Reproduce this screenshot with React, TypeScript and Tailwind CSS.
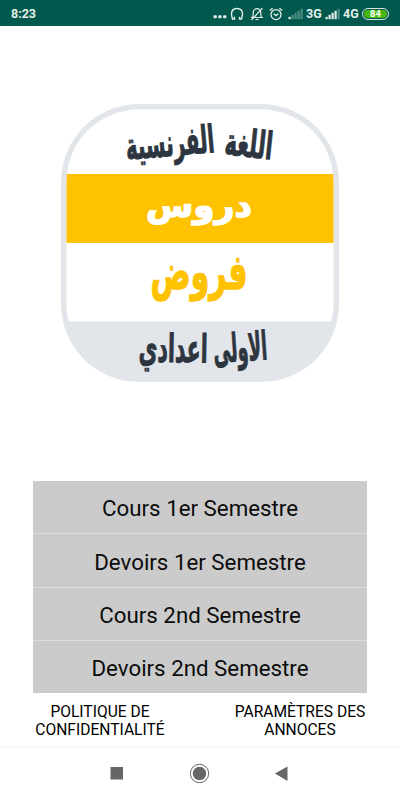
import { useState } from "react";

interface LogoWordProps {
  text: string;
  x: number;
  y: number;
  width: number;
  size: number;
  angle?: number;
  weight?: number;
  color: string;
}

const menuItems = [
  "Cours 1er Semestre",
  "Devoirs 1er Semestre",
  "Cours 2nd Semestre",
  "Devoirs 2nd Semestre",
];

// x / y is the middle of the word's baseline
const LogoWord: React.FC<LogoWordProps> = ({
  text,
  x,
  y,
  width,
  size,
  angle = 0,
  weight = 1,
  color,
}) => (
  <text
    transform={`translate(${x} ${y}) rotate(${angle})`}
    textAnchor="middle"
    direction="rtl"
    textLength={width}
    lengthAdjust="spacingAndGlyphs"
    fontSize={size}
    fill={color}
    stroke={color}
    strokeWidth={weight}
    className="font-['DejaVu_Sans',sans-serif] font-bold"
  >
    {text}
  </text>
);

const Logo = () => (
  <svg viewBox="0 0 278 278" className="h-[278px] w-[278px] overflow-visible">
    <defs>
      <clipPath id="inner">
        <rect x="5.5" y="5.5" width="267" height="267" rx="72" />
      </clipPath>
    </defs>
    <rect width="278" height="278" rx="78" fill="#e2e5ea" />
    <g clipPath="url(#inner)">
      <rect width="278" height="217.5" fill="#fff" />
      <rect y="70" width="278" height="69" fill="#ffc200" />
    </g>
    <LogoWord text="اللغة" x={186.5} y={53} width={48} size={38} angle={6} color="#2d3640" />
    <LogoWord text="الفرنسية" x={110} y={52} width={89} size={38} angle={-5} color="#2d3640" />
    <LogoWord text="دروس" x={138} y={113} width={106} size={33} weight={1.4} color="#fff" />
    <LogoWord text="فروض" x={138} y={184.5} width={97} size={49} weight={1.4} color="#ffc200" />
    <LogoWord text="الاولى" x={180} y={257} width={54} size={39} angle={-4} color="#2d3640" />
    <LogoWord text="اعدادي" x={112} y={258} width={69} size={39} angle={1} color="#2d3640" />
  </svg>
);

const Signal = ({ level }: { level: number }) => (
  <svg viewBox="0 0 16 12" className="h-3 w-4">
    {[0, 1, 2, 3, 4].map((bar) => (
      <rect
        key={bar}
        x={bar * 3 + 0.5}
        y={8.8 - bar * 2}
        width="2.2"
        height={2.4 + bar * 2}
        fill="#e3eeeb"
        opacity={bar < level ? 1 : 0.35}
      />
    ))}
  </svg>
);

const StatusBar = () => (
  <div className="flex h-[26px] items-center bg-[#00594c] pt-0.5 pr-[11px] pl-[11px] text-[12.500px] font-bold text-[#e3eeeb]">
    <span>8:23</span>
    <div className="ml-auto flex items-center">
      <svg viewBox="0 0 14 12" className="mr-[3px] h-3 w-3.5" fill="#e3eeeb">
        <rect x="0.5" y="7.3" width="3.3" height="3" rx="0.8" />
        <rect x="5.3" y="7.3" width="3.3" height="3" rx="0.8" />
        <rect x="10.1" y="7.3" width="3.3" height="3" rx="0.8" />
      </svg>
      {/* headphones */}
      <svg viewBox="0 0 14 14" className="mr-[6px] h-3.5 w-3.5" fill="none" stroke="#e3eeeb" strokeWidth="1.4">
        <path d="M5.100 12H2.500C1.800 10.200 1.500 8.300 1.500 6.800C1.500 3.500 3.800 1.500 7 1.500S12.500 3.500 12.500 6.800C12.500 8.300 12.200 10.200 11.500 12H8.900" />
        <path d="M4.400 9.700v2.600M9.600 9.700v2.600" />
      </svg>
      {/* muted bell */}
      <svg viewBox="0 0 14 14" className="mr-[5px] h-3.5 w-3.5" fill="none" stroke="#e3eeeb" strokeWidth="1.2">
        <path d="M2 10.500h10c-1-.8-1.200-1.800-1.200-3.300V5.500a3.800 3.800 0 0 0-7.600 0v1.700c0 1.500-.2 2.500-1.200 3.300zM5.500 12.500h3M12.500 1L1.500 13" />
      </svg>
      {/* alarm */}
      <svg viewBox="0 0 14 14" className="mr-[5px] h-3.5 w-3.5" fill="none" stroke="#e3eeeb" strokeWidth="1.3">
        <circle cx="7" cy="7.600" r="5" />
        <path d="M.8 3.600L3.700 1.200M13.200 3.600L10.300 1.200M4.700 6.800L7 8.600L9.500 6.800" />
      </svg>
      <Signal level={1} />
      <span className="ml-[2px] w-[16px]">3G</span>
      <span className="ml-[3px] flex">
        <Signal level={4} />
      </span>
      <span className="ml-[2px] w-[17px]">4G</span>
      <div className="ml-[2px] flex h-[12px] w-[27px] rounded-full border border-[#d5e5df] p-px">
        <div className="flex w-full items-center justify-center rounded-full bg-[#46b80c] text-[9.500px] leading-none text-white">
          84
        </div>
      </div>
    </div>
  </div>
);

const App = () => {
  const [selected, setSelected] = useState<string | null>(null);

  return (
    <div className="flex h-[800px] w-[400px] flex-col overflow-hidden bg-white font-[Roboto,sans-serif] text-black">
      <StatusBar />
      <div className="mt-[78px] flex justify-center">
        <Logo />
      </div>

      <div className="mx-[33px] mt-[99px] flex h-[212px] flex-col divide-y divide-[#dedede] bg-[#cbcbcb]">
        {menuItems.map((item) => (
          <button
            key={item}
            aria-pressed={selected === item}
            onClick={() => setSelected(item)}
            className="flex-1 pt-[3px] text-[22.300px] leading-none text-[#0c0c0c]"
          >
            {item}
          </button>
        ))}
      </div>

      <div className="flex justify-between px-[33px] pt-[10px] text-center text-[15.600px] leading-[18px]">
        <button className="w-[134px]">
          POLITIQUE DE
          <br />
          CONFIDENTIALITÉ
        </button>
        <button className="w-[134px]">
          PARAMÈTRES DES
          <br />
          ANNOCES
        </button>
      </div>

      <nav className="mt-auto h-[54px] border-t-2 border-[#f6f6f6]">
        <svg viewBox="0 0 400 52" className="h-[52px] w-full" fill="#666">
          <rect x="110.500" y="19" width="12.500" height="12.500" />
          <circle cx="199.500" cy="25.500" r="6.700" />
          <circle cx="199.500" cy="25.500" r="9.200" fill="none" stroke="#666" strokeWidth="1" />
          <path d="M275 25.500L287.500 18.500V33Z" />
        </svg>
      </nav>
    </div>
  );
};

export default App;
